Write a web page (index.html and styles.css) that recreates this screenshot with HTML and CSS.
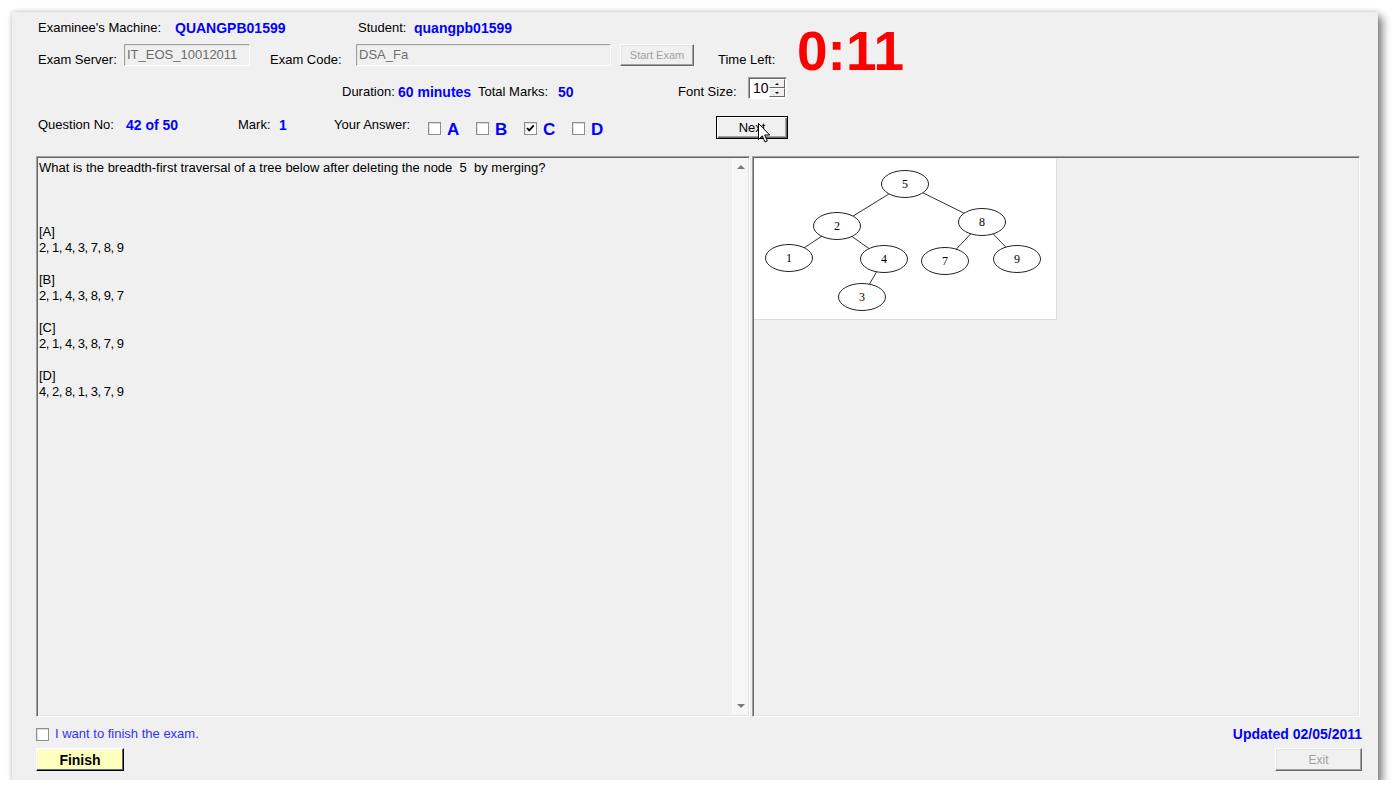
FILE: index.html
```html
<!DOCTYPE html>
<html>
<head>
<meta charset="utf-8">
<title>EOS Exam</title>
<link rel="stylesheet" href="styles.css">
</head>
<body>
<div class="window">
  <div class="row row-machine">
    <span class="lbl">Examinee's Machine:</span>
    <span class="val">QUANGPB01599</span>
    <span class="lbl">Student:</span>
    <span class="val">quangpb01599</span>
  </div>

  <div class="row row-server">
    <span class="lbl lbl-server">Exam Server:</span>
    <div class="field field-server">IT_EOS_10012011</div>
    <span class="lbl lbl-code">Exam Code:</span>
    <div class="field field-code">DSA_Fa</div>
    <button class="btn btn-start" disabled>Start Exam</button>
    <span class="lbl lbl-time">Time Left:</span>
    <span class="timer">0:11</span>
  </div>

  <div class="row row-duration">
    <span class="lbl lbl-duration">Duration:</span>
    <span class="val val-duration">60 minutes</span>
    <span class="lbl lbl-total">Total Marks:</span>
    <span class="val val-total">50</span>
    <span class="lbl lbl-font">Font Size:</span>
    <div class="spin">
      <span class="spin-value">10</span>
      <div class="spin-buttons">
        <span class="spin-btn"><i class="tri-up"></i></span>
        <span class="spin-btn"><i class="tri-down"></i></span>
      </div>
    </div>
  </div>

  <div class="row row-question">
    <span class="lbl">Question No:</span>
    <span class="val">42 of 50</span>
    <span class="lbl">Mark:</span>
    <span class="val">1</span>
    <span class="lbl">Your Answer:</span>
    <span class="cb"></span><span class="answer">A</span>
    <span class="cb"></span><span class="answer">B</span>
    <span class="cb checked"><svg width="11" height="11" viewBox="0 0 11 11"><path d="M2 5 L4.2 7.4 L8.8 2.4" fill="none" stroke="#000" stroke-width="1.8"/></svg></span><span class="answer">C</span>
    <span class="cb"></span><span class="answer answer-last">D</span>
    <button class="btn btn-next">Next
      <svg class="cursor" width="13" height="21" viewBox="0 0 13 21"><path d="M0.5 0.5 L0.5 16.5 L4.3 12.8 L7 19 L9.3 18 L6.7 12 L11.7 12 Z" fill="#fff" stroke="#000" stroke-width="1" stroke-linejoin="miter"/></svg>
    </button>
  </div>

  <div class="panels">
    <div class="qpanel">
      <div class="qtext">
        <p class="question">What is the breadth-first traversal of a tree below after deleting the node&nbsp; 5&nbsp; by merging?</p>
        <div class="opt"><div>[A]</div><div class="seq">2, 1, 4, 3, 7, 8, 9</div></div>
        <div class="opt"><div>[B]</div><div class="seq">2, 1, 4, 3, 8, 9, 7</div></div>
        <div class="opt"><div>[C]</div><div class="seq">2, 1, 4, 3, 8, 7, 9</div></div>
        <div class="opt"><div>[D]</div><div class="seq">4, 2, 8, 1, 3, 7, 9</div></div>
      </div>
      <div class="scroll"><i class="tri-up gray"></i><i class="tri-down gray"></i></div>
    </div>
    <div class="ipanel">
      <div class="tree">
        <svg width="303" height="161" viewBox="0 0 303 161">
          <g stroke="#333" stroke-width="1">
            <line x1="151" y1="25" x2="83" y2="67"/>
            <line x1="151" y1="25" x2="228" y2="63"/>
            <line x1="83" y1="67" x2="35" y2="99"/>
            <line x1="83" y1="67" x2="130" y2="100"/>
            <line x1="130" y1="100" x2="108" y2="138"/>
            <line x1="228" y1="63" x2="191" y2="102"/>
            <line x1="228" y1="63" x2="263" y2="100"/>
          </g>
          <g fill="#fff" stroke="#222" stroke-width="1">
            <ellipse cx="151" cy="25" rx="23.5" ry="13.5"/>
            <ellipse cx="83" cy="67" rx="23.5" ry="13.5"/>
            <ellipse cx="228" cy="63" rx="23.5" ry="13.5"/>
            <ellipse cx="35" cy="99" rx="23.5" ry="13.5"/>
            <ellipse cx="130" cy="100" rx="23.5" ry="13.5"/>
            <ellipse cx="191" cy="102" rx="23.5" ry="13.5"/>
            <ellipse cx="263" cy="100" rx="23.5" ry="13.5"/>
            <ellipse cx="108" cy="138" rx="23.5" ry="13.5"/>
          </g>
          <g font-family="Liberation Serif, serif" font-size="12" text-anchor="middle" fill="#000">
            <text x="151" y="29">5</text>
            <text x="83" y="71">2</text>
            <text x="228" y="67">8</text>
            <text x="35" y="103">1</text>
            <text x="130" y="104">4</text>
            <text x="191" y="106">7</text>
            <text x="263" y="104">9</text>
            <text x="108" y="142">3</text>
          </g>
        </svg>
      </div>
    </div>
  </div>

  <div class="finish-row">
    <label class="finish-check"><span class="cb"></span><span class="finish-text">I want to finish the exam.</span></label>
    <span class="updated">Updated 02/05/2011</span>
  </div>

  <div class="button-row">
    <button class="btn btn-finish">Finish</button>
    <button class="btn btn-exit" disabled>Exit</button>
  </div>
</div>
</body>
</html>
```

FILE: styles.css
```css
html, body {
  margin: 0;
  background: #ffffff;
}

body {
  font-family: "Liberation Sans", Arial, sans-serif;
  font-size: 13px;
  color: #000;
}

.window {
  width: 1366px;
  height: 768px;
  margin: 12px 0 0 12px;
  box-sizing: border-box;
  padding: 6px 16px 0 24px;
  background: #f0f0f0;
  box-shadow: 0 0 5px rgba(0, 0, 0, 0.22), 5px 5px 8px rgba(0, 0, 0, 0.45);
}

.row {
  display: flex;
  white-space: nowrap;
}

.lbl {
  line-height: 16px;
  flex: none;
}

.val {
  color: #0000ff;
  font-weight: bold;
  font-size: 14px;
  line-height: 16px;
  flex: none;
}

/* row 1 */
.row-machine {
  height: 20px;
  align-items: center;
  padding-left: 2px;
}
.row-machine > :nth-child(1) { width: 137px; }
.row-machine > :nth-child(2) { width: 183px; }
.row-machine > :nth-child(3) { width: 56px; }

/* row 2 */
.row-server {
  height: 24px;
  margin-top: 6px;
  padding-left: 2px;
  align-items: flex-end;
}
.lbl-server { width: 86px; }
.lbl-code { width: 86px; margin-left: 20px; }
.lbl-time { width: 79px; margin-left: 24px; }

.field {
  align-self: flex-start;
  height: 22px;
  box-sizing: border-box;
  border: 1px solid;
  border-color: #a0a0a0 #ffffff #ffffff #a0a0a0;
  box-shadow: inset 1px 1px #e3e3e3;
  background: #f0f0f0;
  color: #6d6d6d;
  padding: 0 2px;
  line-height: 19px;
}
.field-server { width: 126px; }
.field-code { width: 255px; }

.btn {
  font-family: "Liberation Sans", Arial, sans-serif;
  background: #f0f0f0;
  border: 1px solid;
  border-color: #ffffff #696969 #696969 #ffffff;
  box-shadow: inset -1px -1px #a0a0a0, inset 1px 1px #e3e3e3;
  padding: 0;
  margin: 0;
  color: #000;
  box-sizing: border-box;
}
.btn:disabled {
  color: #a0a0a0;
}
.btn-start {
  align-self: flex-start;
  margin-left: 9px;
  width: 74px;
  height: 22px;
  font-size: 11px;
}

.timer {
  align-self: flex-start;
  color: #ff0000;
  font-weight: bold;
  font-size: 55px;
  line-height: 44px;
  margin-top: -15px;
}

/* row 3 */
.row-duration {
  height: 23px;
  margin-top: 9px;
  padding-left: 306px;
  align-items: flex-end;
}
.lbl-duration { width: 56px; }
.val-duration { width: 80px; }
.lbl-total { width: 80px; }
.val-total { width: 120px; }
.lbl-font { width: 70px; }

.spin {
  align-self: flex-start;
  width: 39px;
  height: 22px;
  box-sizing: border-box;
  border: 1px solid;
  border-color: #a0a0a0 #ffffff #ffffff #a0a0a0;
  box-shadow: inset 1px 1px #696969;
  background: #fff;
  display: flex;
  justify-content: space-between;
}
.spin-value {
  font-size: 14px;
  line-height: 20px;
  padding-left: 4px;
}
.spin-buttons {
  display: flex;
  flex-direction: column;
  width: 16px;
  padding: 1px 1px 1px 0;
}
.spin-btn {
  flex: 1;
  background: #f0f0f0;
  border: 1px solid;
  border-color: #ffffff #696969 #696969 #ffffff;
  display: flex;
  align-items: center;
  justify-content: center;
}

.tri-up, .tri-down {
  display: block;
  width: 0;
  height: 0;
  border-left: 2px solid transparent;
  border-right: 2px solid transparent;
}
.tri-up { border-bottom: 2px solid #000; }
.tri-down { border-top: 2px solid #000; }
.tri-up.gray {
  border-left-width: 4px;
  border-right-width: 4px;
  border-bottom: 4px solid #7a7a7a;
}
.tri-down.gray {
  border-left-width: 4px;
  border-right-width: 4px;
  border-top: 4px solid #7a7a7a;
}

/* row 4 */
.row-question {
  height: 23px;
  margin-top: 16px;
  padding-left: 2px;
  align-items: center;
}
.row-question > .lbl,
.row-question > .val { margin-bottom: 5px; }
.row-question > :nth-child(1) { width: 88px; }
.row-question > :nth-child(2) { width: 112px; }
.row-question > :nth-child(3) { width: 41px; }
.row-question > :nth-child(4) { width: 55px; }
.row-question > :nth-child(5) { width: 94px; }

.cb {
  flex: none;
  display: inline-flex;
  align-items: center;
  justify-content: center;
  width: 13px;
  height: 13px;
  box-sizing: border-box;
  border: 1px solid #8f8f8f;
  box-shadow: inset 1px 1px #dedede;
  background: #fff;
  margin-right: 6px;
  margin-top: 2px;
}
.cb svg { display: block; }

.answer {
  flex: none;
  width: 29px;
  color: #0000ff;
  font-weight: bold;
  font-size: 17px;
  line-height: 18px;
  margin-top: 5px;
}
.answer-last { width: 125px; }

.btn-next {
  position: relative;
  flex: none;
  width: 72px;
  height: 23px;
  font-size: 13px;
  border: 1px solid #000;
  box-shadow: inset 1px 1px #ffffff, inset -1px -1px #696969, inset -2px -2px #a0a0a0;
  overflow: visible;
}
.cursor {
  position: absolute;
  left: 41px;
  top: 6px;
}

/* panels */
.panels {
  display: flex;
  gap: 2px;
  height: 561px;
  margin-top: 17px;
}
.qpanel, .ipanel {
  box-sizing: border-box;
  border: 1px solid;
  border-color: #a0a0a0 #ffffff #ffffff #a0a0a0;
  box-shadow: inset 1px 1px #696969, inset -1px -1px #e3e3e3;
}
.qpanel {
  width: 714px;
  display: flex;
}
.qtext {
  flex: 1;
  padding: 3px 0 0 2px;
  line-height: 16px;
  font-size: 13px;
}
.question {
  margin: 0 0 48px;
}
.opt {
  margin-bottom: 16px;
}
.seq {
  letter-spacing: -0.5px;
}
.scroll {
  width: 16px;
  margin: 1px 1px 1px 0;
  background: #f6f6f6;
  border-left: 1px solid #fbfbfb;
  display: flex;
  flex-direction: column;
  justify-content: space-between;
  align-items: center;
  padding: 7px 0 7px;
  box-sizing: border-box;
}
.ipanel {
  width: 608px;
  padding: 2px 1px;
}
.tree {
  width: 303px;
  height: 161px;
  background: #fff;
  box-sizing: border-box;
  border-right: 1px solid #dcdcdc;
  border-bottom: 1px solid #dcdcdc;
  overflow: hidden;
}
.tree svg { display: block; }

/* bottom */
.finish-row {
  display: flex;
  justify-content: space-between;
  align-items: center;
  height: 16px;
  margin-top: 9px;
}
.finish-check {
  display: flex;
  align-items: center;
}
.finish-check .cb {
  margin: 0 6px 0 0;
}
.finish-text {
  color: #3030ff;
  line-height: 16px;
}
.updated {
  color: #0000ff;
  font-weight: bold;
  font-size: 14px;
  line-height: 16px;
}
.button-row {
  display: flex;
  justify-content: space-between;
  margin-top: 6px;
}
.btn-finish {
  width: 88px;
  height: 23px;
  background: #ffffc0;
  font-weight: bold;
  font-size: 14px;
  border-color: #ffffff #000000 #000000 #ffffff;
  box-shadow: inset -1px -1px #696969, inset 1px 1px #f8f8e0;
}
.btn-exit {
  width: 87px;
  height: 23px;
  font-size: 12px;
}
```
